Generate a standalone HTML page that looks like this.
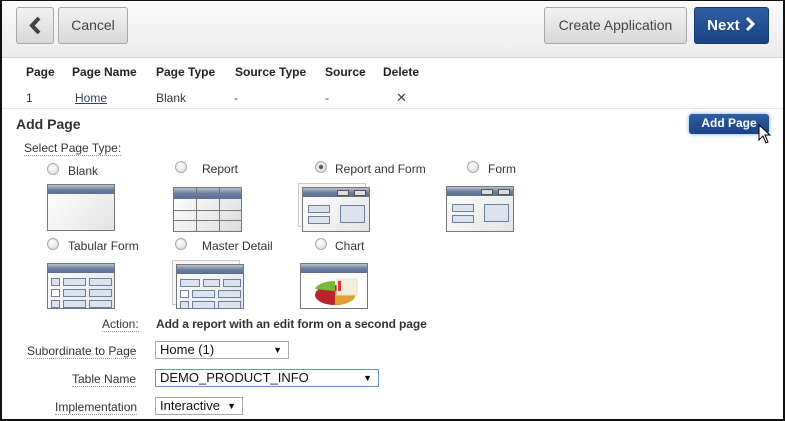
<!DOCTYPE html>
<html><head><meta charset="utf-8"><style>
*{box-sizing:border-box;margin:0;padding:0}
body{width:785px;height:421px;overflow:hidden;background:#fff;font-family:"Liberation Sans",Arial,sans-serif;font-size:12px;color:#333;position:relative}
.frame{position:absolute;left:0;top:0;width:785px;height:421px;border:2px solid #111;border-top-width:1px;border-right-width:2px}
.a{position:absolute}
.hdr{position:absolute;left:2px;top:1px;width:781px;height:57px;background:linear-gradient(#fbfbfb,#ececec);border-bottom:1px solid #d4d4d4}
.btn{position:absolute;border:1px solid #a8a8a8;border-radius:3px;background:linear-gradient(#f2f2f2,#d8d8d8);color:#444;font-size:14px;text-align:center}
.th{position:absolute;top:65px;font-weight:bold;font-size:12px;color:#222}
.td{position:absolute;top:91px;font-size:12px;color:#333}
.lbl{position:absolute;font-size:12px;color:#333;border-bottom:1px dotted #999;line-height:14px}
.radio{position:absolute;width:12px;height:12px;border-radius:50%;border:1px solid #aaa;background:radial-gradient(circle at 40% 35%,#fff,#d8d8d8)}
.rt{position:absolute;font-size:12px;color:#333}
.ic{position:absolute;border:1px solid #777;background:linear-gradient(135deg,#fff,#e4e4e4)}
.bar{position:absolute;left:0;right:0;top:0;height:9px;background:linear-gradient(#b8c2d3,#6d7fa0 50%,#5a6e93);}
.fld{position:absolute;border:1px solid #6d7fa0;background:#dde3ec;height:8px}
.sel{position:absolute;border:1px solid #aaa;background:#fff;font-size:13px;color:#111;padding-left:4px;line-height:16px;height:18px}
.sel span{position:absolute;right:6px;top:0;font-size:9px}
</style></head><body>
<div class="hdr"></div>
<div class="btn" style="left:16px;top:7px;width:38px;height:37px;"><svg width="38" height="35" viewBox="0 0 38 35"><path d="M22 10 L15 17.5 L22 25" stroke="#444" stroke-width="4" fill="none"/></svg></div>
<div class="btn" style="left:58px;top:7px;width:70px;height:37px;line-height:35px;">Cancel</div>
<div class="btn" style="left:544px;top:7px;width:143px;height:37px;line-height:35px;">Create Application</div>
<div class="btn" style="left:694px;top:7px;width:75px;height:37px;line-height:35px;background:linear-gradient(#2f5fa2,#1a4284);border-color:#163a75;color:#fff;font-weight:bold;font-size:15px;">Next <svg width="12" height="16" viewBox="0 0 12 16" style="vertical-align:-2px"><path d="M3 2 L9 8 L3 14" stroke="#fff" stroke-width="3" fill="none"/></svg></div>

<div class="th" style="left:26px">Page</div>
<div class="th" style="left:72px">Page Name</div>
<div class="th" style="left:156px">Page Type</div>
<div class="th" style="left:235px">Source Type</div>
<div class="th" style="left:325px">Source</div>
<div class="th" style="left:383px">Delete</div>
<div class="td" style="left:26px">1</div>
<div class="td" style="left:75px;text-decoration:underline;color:#345">Home</div>
<div class="td" style="left:156px">Blank</div>
<div class="td" style="left:234px">-</div>
<div class="td" style="left:325px">-</div>
<div class="td" style="left:396px;font-size:13px;top:90px;color:#444">✕</div>
<div class="a" style="left:2px;top:108px;width:781px;border-top:1px solid #e8e8e8"></div>

<div class="a" style="left:16px;top:116px;font-weight:bold;font-size:14px;color:#333">Add Page</div>
<div class="a" style="left:689px;top:114px;width:80px;height:20px;border-radius:3px;background:linear-gradient(#2f5fa2,#1a4284);color:#fff;font-size:12px;font-weight:bold;text-align:center;line-height:19px;box-shadow:0 0 4px #6af">Add Page</div>
<svg class="a" style="left:758px;top:124px" width="16" height="22" viewBox="0 0 16 22"><path d="M1 1 L1 16 L5 12 L8 19 L10 18 L7 11 L12 11 Z" fill="#fff" stroke="#000"/></svg>

<div class="lbl" style="left:24px;top:141px">Select Page Type:</div>

<div class="radio" style="left:47px;top:163px"></div><div class="rt" style="left:68px;top:164px">Blank</div>
<div class="radio" style="left:175px;top:161px"></div><div class="rt" style="left:202px;top:162px">Report</div>
<div class="radio" style="left:315px;top:161px;background:radial-gradient(circle,#555 25%,#eee 35%,#d8d8d8)"></div><div class="rt" style="left:335px;top:162px">Report and Form</div>
<div class="radio" style="left:467px;top:161px"></div><div class="rt" style="left:488px;top:162px">Form</div>
<div class="radio" style="left:47px;top:238px"></div><div class="rt" style="left:68px;top:239px">Tabular Form</div>
<div class="radio" style="left:175px;top:238px"></div><div class="rt" style="left:202px;top:239px">Master Detail</div>
<div class="radio" style="left:315px;top:238px"></div><div class="rt" style="left:335px;top:239px">Chart</div>

<div class="ic" style="left:47px;top:184px;width:68px;height:47px"><div class="bar"></div></div>
<div class="ic" style="left:173px;top:187px;width:69px;height:45px;background:linear-gradient(135deg,#fff,#ddd)"><div class="bar" style="height:11px"></div>
<div class="a" style="left:22px;top:0;bottom:0;border-left:1px solid #777"></div><div class="a" style="left:45px;top:0;bottom:0;border-left:1px solid #777"></div>
<div class="a" style="left:0;right:0;top:22px;border-top:1px solid #777"></div><div class="a" style="left:0;right:0;top:32px;border-top:1px solid #777"></div></div>
<div class="ic" style="left:298px;top:183px;width:68px;height:44px;border-color:#ccc;background:#f6f6f6"></div>
<div class="ic" style="left:302px;top:187px;width:68px;height:45px"><div class="bar"></div>
<div class="a" style="left:34px;top:2px;width:12px;height:6px;background:#ddd;border:1px solid #555"></div><div class="a" style="left:51px;top:2px;width:12px;height:6px;background:#ddd;border:1px solid #555"></div>
<div class="fld" style="left:5px;top:17px;width:22px"></div><div class="fld" style="left:5px;top:28px;width:22px"></div>
<div class="fld" style="left:37px;top:17px;width:25px;height:18px"></div></div>
<div class="ic" style="left:446px;top:186px;width:68px;height:46px"><div class="bar"></div>
<div class="a" style="left:34px;top:2px;width:12px;height:6px;background:#ddd;border:1px solid #555"></div><div class="a" style="left:51px;top:2px;width:12px;height:6px;background:#ddd;border:1px solid #555"></div>
<div class="fld" style="left:5px;top:17px;width:22px"></div><div class="fld" style="left:5px;top:28px;width:22px"></div>
<div class="fld" style="left:37px;top:17px;width:25px;height:18px"></div></div>
<div class="ic" style="left:47px;top:263px;width:68px;height:46px"><div class="bar"></div>
<div class="fld" style="left:3px;top:14px;width:9px"></div><div class="fld" style="left:15px;top:14px;width:23px"></div><div class="fld" style="left:41px;top:14px;width:23px"></div>
<div class="fld" style="left:3px;top:25px;width:9px;background:#fff"></div><div class="fld" style="left:15px;top:25px;width:23px"></div><div class="fld" style="left:41px;top:25px;width:23px"></div>
<div class="fld" style="left:3px;top:36px;width:9px"></div><div class="fld" style="left:15px;top:36px;width:23px"></div><div class="fld" style="left:41px;top:36px;width:23px"></div></div>
<div class="ic" style="left:172px;top:260px;width:68px;height:45px;border-color:#ccc;background:#f6f6f6"></div>
<div class="ic" style="left:176px;top:264px;width:68px;height:45px"><div class="bar"></div>
<div class="fld" style="left:3px;top:14px;width:20px"></div><div class="fld" style="left:26px;top:14px;width:17px"></div><div class="fld" style="left:46px;top:14px;width:18px"></div>
<div class="fld" style="left:3px;top:25px;width:9px;background:#fff"></div><div class="fld" style="left:15px;top:25px;width:23px"></div><div class="fld" style="left:41px;top:25px;width:23px"></div>
<div class="fld" style="left:3px;top:36px;width:9px"></div><div class="fld" style="left:15px;top:36px;width:23px"></div><div class="fld" style="left:41px;top:36px;width:23px"></div></div>
<div class="ic" style="left:300px;top:263px;width:68px;height:46px;background:#fff"><div class="bar"></div>
<svg class="a" style="left:12px;top:13px" width="48" height="30" viewBox="0 0 48 30"><ellipse cx="22" cy="18" rx="20" ry="10" fill="#b8262a"/><path d="M22 14 L22 4 A20 10 0 0 0 2 12 Z" fill="#7ab83a"/><path d="M22 14 L22 28 A20 10 0 0 0 42 16 Z" fill="#e0a030"/><rect x="24" y="2" width="20" height="16" fill="#f6eedb" stroke="#ddd"/><rect x="25" y="4" width="3" height="10" fill="#e33"/></svg></div>

<div class="lbl" style="left:102px;top:317px">Action:</div>
<div class="a" style="left:156px;top:317px;font-weight:bold;color:#333;letter-spacing:-0.1px">Add a report with an edit form on a second page</div>
<div class="lbl" style="left:27px;top:344px">Subordinate to Page</div>
<div class="sel" style="left:155px;top:341px;width:134px">Home (1)<span>▼</span></div>
<div class="lbl" style="left:72px;top:372px">Table Name</div>
<div class="sel" style="left:155px;top:369px;width:224px;border-color:#6c8fd0">DEMO_PRODUCT_INFO<span>▼</span></div>
<div class="lbl" style="left:55px;top:400px">Implementation</div>
<div class="sel" style="left:155px;top:397px;width:88px">Interactive<span>▼</span></div>
<div class="frame"></div>
</body></html>
